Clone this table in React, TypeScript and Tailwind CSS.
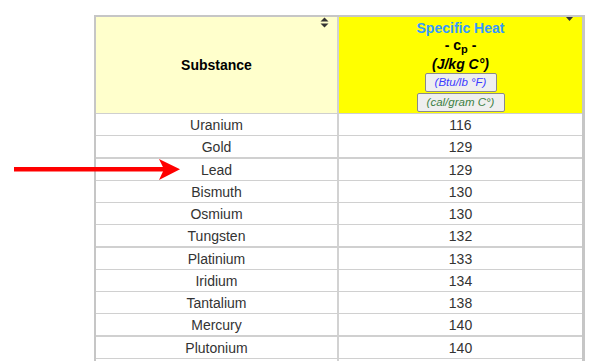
import React from "react";

const rows: [string, string, boolean][] = [
  ["Uranium", "116", false],
  ["Gold", "129", true],
  ["Lead", "129", false],
  ["Bismuth", "130", false],
  ["Osmium", "130", false],
  ["Tungsten", "132", true],
  ["Platinium", "133", false],
  ["Iridium", "134", false],
  ["Tantalium", "138", false],
  ["Mercury", "140", true],
  ["Plutonium", "140", false],
];

export default function App() {
  return (
    <div
      className="relative w-[607px] h-[361px] overflow-hidden bg-white"
      style={{ fontFamily: '"Liberation Sans", Arial, sans-serif' }}
    >
      <div className="ml-[94px] mt-[15px] w-[491px] border-l-2 border-t-2 border-r-[3px] border-[#c6c6c6]">
        {/* header */}
        <div className="flex h-[97px] border-b border-[#cfcfcf]">
          <div className="relative w-[243px] h-[96px] bg-[#ffffcc] border-r-2 border-[#d2d2d2] flex items-center justify-center">
            <span className="text-[14px] font-bold text-black">Substance</span>
            <svg className="absolute left-[224px] top-0" width="9" height="11" viewBox="0 0 9 11">
              <polygon points="0.5,4.5 8.5,4.5 4.5,0.5" fill="#333" />
              <polygon points="0.5,6.5 8.5,6.5 4.5,10.5" fill="#333" />
            </svg>
          </div>
          <div className="relative w-[243px] h-[96px] bg-[#ffff00] flex flex-col items-center pt-[3px]">
            <svg className="absolute left-[227px] top-0" width="7" height="4" viewBox="0 0 7 4">
              <polygon points="0,0 7,0 3.5,4" fill="#333" />
            </svg>
            <div className="h-[17px] leading-[17px] text-[14px] font-bold text-[#3399ff]">Specific Heat</div>
            <div className="h-[18px] leading-[16px] text-[14px] font-bold text-black whitespace-pre">
              {"- c"}
              <span className="relative top-[3px] text-[11px]">p</span>
              {" -"}
            </div>
            <div className="h-[18px] leading-[18px] text-[14px] font-bold italic text-black">(J/kg C°)</div>
            <button className="w-[72px] h-[19px] bg-[#efefef] border border-[#8a8a8a] rounded-[2px] text-[11.5px] italic text-[#3b3bff] leading-[17px] p-0">
              (Btu/lb °F)
            </button>
            <button className="mt-[1px] w-[88px] h-[19px] bg-[#efefef] border border-[#8a8a8a] rounded-[2px] text-[11.5px] italic text-[#3d7f44] leading-[17px] p-0">
              (cal/gram C°)
            </button>
          </div>
        </div>
        {rows.map(([name, val, thick]) => (
          <div
            key={name}
            className={`flex ${thick ? "h-[23px] border-b-2" : "h-[22px] border-b"} border-[#d0d0d0]`}
          >
            <div className="w-[243px] h-[21px] pt-[1px] border-r-2 border-[#d2d2d2] flex items-center justify-center text-[14px] text-[#333]">
              {name}
            </div>
            <div className="w-[243px] h-[21px] pt-[1px] flex items-center justify-center text-[14px] text-[#333]">
              {val}
            </div>
          </div>
        ))}
        <div className="flex h-[22px]">
          <div className="w-[243px] h-[22px] border-r-2 border-[#d2d2d2]" />
          <div className="w-[243px] h-[22px]" />
        </div>
      </div>
      <svg className="absolute left-0 top-0" width="200" height="200" viewBox="0 0 200 200">
        <rect x="14" y="167" width="150" height="4.5" fill="#ff0000" />
        <polygon points="159,159 180,169.25 159,180 164,169.25" fill="#ff0000" />
      </svg>
    </div>
  );
}
